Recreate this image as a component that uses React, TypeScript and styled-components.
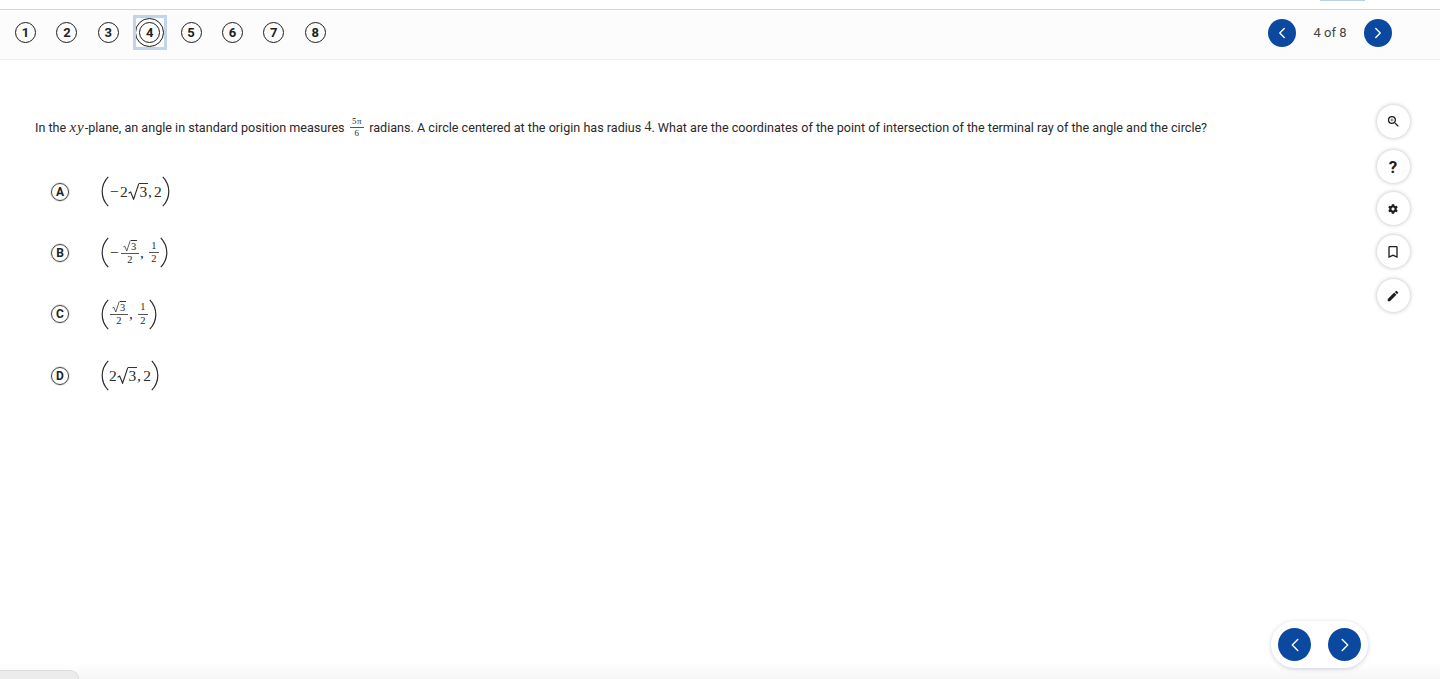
import React from "react";
import styled, { createGlobalStyle } from "styled-components";
import { ChevronLeft, ChevronRight } from "lucide-react";
import { MdBookmarkBorder, MdEdit, MdZoomIn } from "react-icons/md";
import { FaCog } from "react-icons/fa";

const BLUE = "#0b48a0";
const MATH_FONT = `"Liberation Serif", serif`;

const GlobalStyle = createGlobalStyle`
  html, body {
    margin: 0;
    padding: 0;
    height: 100%;
    background: #fff;
    overflow: hidden;
  }
  body {
    font-family: Roboto, "Liberation Sans", sans-serif;
    color: #2a2a2a;
  }
`;

const Page = styled.div`
  position: relative;
  height: 679px;
  overflow: hidden;
  background: #fff;
`;

const TopStrip = styled.div`
  height: 9px;
  display: flex;
  justify-content: flex-end;
  padding-right: 75px;
`;

const TopTab = styled.div`
  width: 45px;
  height: 1px;
  background: #bccde6;
`;

const NavBar = styled.nav`
  box-sizing: border-box;
  height: 51px;
  display: flex;
  align-items: center;
  justify-content: space-between;
  padding: 0 48px 4px 15px;
  background: #fcfcfc;
  border-top: 1px solid #d6d6d6;
  border-bottom: 1px solid #f0f0f0;
`;

const Steps = styled.div`
  display: flex;
  align-items: center;
  gap: 20.4px;
`;

const Step = styled.div<{ $active?: boolean }>`
  position: relative;
  box-sizing: border-box;
  width: 21px;
  height: 21px;
  flex: none;
  display: flex;
  align-items: center;
  justify-content: center;
  border-radius: 50%;
  border: ${(p) => (p.$active ? "1.6px" : "1px")} solid #1c1c1c;
  font-size: 13px;
  font-weight: 700;
  color: #222;
  background: ${(p) => (p.$active ? "#fff" : "transparent")};

  ${(p) =>
    p.$active &&
    `
    &::before {
      content: "";
      position: absolute;
      inset: -5px;
      border-radius: 50%;
      border: 1px solid #1c1c1c;
    }
    &::after {
      content: "";
      position: absolute;
      inset: -8.1px -7.6px;
      border: 3px solid #c2d3ea;
    }
  `}
`;

const Pager = styled.div`
  display: flex;
  align-items: center;
`;

const PagerLabel = styled.span`
  width: 68px;
  text-align: center;
  font-size: 13px;
  color: #444;
`;

const RoundButton = styled.button<{ $size: number }>`
  width: ${(p) => p.$size}px;
  height: ${(p) => p.$size}px;
  flex: none;
  padding: 0;
  display: flex;
  align-items: center;
  justify-content: center;
  border: none;
  border-radius: 50%;
  background: ${BLUE};
  color: #fff;
`;

const Main = styled.main`
  display: flex;
  justify-content: space-between;
  padding: 45px 30.5px 0 35px;
`;

const Content = styled.div`
  padding-top: 12px;
`;

const Question = styled.p`
  margin: 0;
  display: flex;
  align-items: center;
  height: 20px;
  font-size: 12.6px;
  white-space: pre;
  color: #2a2a2a;
`;

const MathText = styled.span<{ $italic?: boolean }>`
  font-family: ${MATH_FONT};
  font-style: ${(p) => (p.$italic ? "italic" : "normal")};
  font-size: ${(p) => (p.$italic ? 15 : 14)}px;
  letter-spacing: ${(p) => (p.$italic ? "1px" : "0")};
`;

const Fraction = styled.span<{ $size: number }>`
  display: inline-flex;
  flex-direction: column;
  align-items: center;
  margin: 0 ${(p) => (p.$size < 10 ? 6.5 : 2)}px;
  font-family: ${MATH_FONT};
  font-size: ${(p) => p.$size}px;
  line-height: 1;
  letter-spacing: 0.3px;
  color: #2a2a2a;
`;

const Numerator = styled.span`
  display: flex;
  justify-content: center;
  min-width: 100%;
  padding: 0 1px 1px;
  border-bottom: 1px solid #555;
`;

const Denominator = styled.span`
  padding-top: 1px;
`;

const Options = styled.div`
  margin-top: 24px;
  padding-left: 16px;
  display: flex;
  flex-direction: column;
`;

const OptionRow = styled.div`
  height: 61.3px;
  display: flex;
  align-items: center;
  gap: 32px;
`;

const Badge = styled.span`
  box-sizing: border-box;
  width: 18px;
  height: 18px;
  display: flex;
  align-items: center;
  justify-content: center;
  border-radius: 50%;
  border: 1px solid #444;
  box-shadow: 0 0 0 1px #e4e4e4;
  font-size: 12px;
  font-weight: 700;
  color: #222;
`;

const Formula = styled.span`
  display: inline-flex;
  align-items: center;
  font-family: ${MATH_FONT};
  font-size: 15.5px;
  letter-spacing: 0.2px;
  color: #2a2a2a;
  white-space: pre;
`;

const Minus = styled.span`
  margin: 0 1px;
`;

const Comma = styled.span<{ $wide?: boolean }>`
  margin-right: ${(p) => (p.$wide ? 4 : 2)}px;
`;

const Paren = styled.svg`
  width: 8px;
  height: 31px;
  flex: none;
  fill: none;
  stroke: #2a2a2a;
  stroke-width: 1.2;
`;

const Root = styled.span`
  display: inline-flex;
  align-items: flex-start;
  line-height: 1;
`;

const RootSign = styled.svg`
  width: 0.72em;
  height: 1.12em;
  flex: none;
  fill: none;
  stroke: #2a2a2a;
  stroke-width: 1;
`;

const Radicand = styled.span`
  border-top: 1px solid #333;
  padding: 0 0.5px;
  line-height: 1.05;
`;

const Tools = styled.aside`
  display: flex;
  flex-direction: column;
`;

const ToolButton = styled.button<{ $gap: number }>`
  width: 33px;
  height: 33px;
  margin-top: ${(p) => p.$gap}px;
  padding: 0;
  display: flex;
  align-items: center;
  justify-content: center;
  border: none;
  border-radius: 50%;
  background: #fff;
  color: #1e1e1e;
  font-family: Roboto, sans-serif;
  font-size: 17px;
  font-weight: 700;
  box-shadow: 0 0 4px rgba(0, 0, 0, 0.28);
`;

const FloatingPager = styled.div`
  position: absolute;
  right: 72px;
  bottom: 11px;
  z-index: 2;
  box-sizing: border-box;
  width: 97px;
  height: 47px;
  display: flex;
  align-items: center;
  justify-content: center;
  gap: 17px;
  border-radius: 24px;
  background: #fff;
  box-shadow: 0 1px 4px rgba(60, 70, 110, 0.25);
`;

const BottomFade = styled.div`
  position: absolute;
  left: 0;
  right: 0;
  bottom: 0;
  height: 16px;
  background: linear-gradient(to bottom, rgba(238, 238, 238, 0), rgba(238, 238, 238, 0.55));
`;

const CornerTab = styled.div`
  position: absolute;
  left: 0;
  bottom: 0;
  width: 78px;
  height: 8px;
  background: #ececec;
  border-top: 1px solid #dcdcdc;
  border-right: 1px solid #dcdcdc;
  border-top-right-radius: 9px;
`;

const LeftParen = () => (
  <Paren viewBox="0 0 8 31">
    <path d="M7.2 0.8C2.8 5.5 1.2 10 1.2 15.5s1.6 10 6 14.7" />
  </Paren>
);

const RightParen = () => (
  <Paren viewBox="0 0 8 31">
    <path d="M0.8 0.8C5.2 5.5 6.8 10 6.8 15.5s-1.6 10-6 14.7" />
  </Paren>
);

const Sqrt3 = () => (
  <Root>
    <RootSign viewBox="0 0 10 16" preserveAspectRatio="none">
      <path d="M0.5 9.5 2.4 8.4 5 15 9.7 0.5" />
    </RootSign>
    <Radicand>3</Radicand>
  </Root>
);

const Half = () => (
  <Fraction $size={10.5}>
    <Numerator>1</Numerator>
    <Denominator>2</Denominator>
  </Fraction>
);

const RootOverTwo = () => (
  <Fraction $size={10.5}>
    <Numerator>
      <Sqrt3 />
    </Numerator>
    <Denominator>2</Denominator>
  </Fraction>
);

const options = [
  {
    letter: "A",
    math: (
      <>
        <Minus>−</Minus>2
        <Sqrt3 />
        <Comma>,</Comma>2
      </>
    ),
  },
  {
    letter: "B",
    math: (
      <>
        <Minus>−</Minus>
        <RootOverTwo />
        <Comma $wide>,</Comma>
        <Half />
      </>
    ),
  },
  {
    letter: "C",
    math: (
      <>
        <RootOverTwo />
        <Comma $wide>,</Comma>
        <Half />
      </>
    ),
  },
  {
    letter: "D",
    math: (
      <>
        2
        <Sqrt3 />
        <Comma>,</Comma>2
      </>
    ),
  },
];

const App = () => {
  return (
    <Page>
      <GlobalStyle />
      <TopStrip>
        <TopTab />
      </TopStrip>
      <NavBar>
        <Steps>
          {[1, 2, 3, 4, 5, 6, 7, 8].map((n) => (
            <Step key={n} $active={n === 4}>
              {n}
            </Step>
          ))}
        </Steps>
        <Pager>
          <RoundButton $size={28}>
            <ChevronLeft size={18} strokeWidth={1.8} />
          </RoundButton>
          <PagerLabel>4 of 8</PagerLabel>
          <RoundButton $size={28}>
            <ChevronRight size={18} strokeWidth={1.8} />
          </RoundButton>
        </Pager>
      </NavBar>
      <Main>
        <Content>
          <Question>
            In the <MathText $italic>xy</MathText>-plane, an angle in standard position measures
            <Fraction $size={9}>
              <Numerator>5π</Numerator>
              <Denominator>6</Denominator>
            </Fraction>
            radians. A circle centered at the origin has radius <MathText>4</MathText>. What are the
            coordinates of the point of intersection of the terminal ray of the angle and the circle?
          </Question>
          <Options>
            {options.map((option) => (
              <OptionRow key={option.letter}>
                <Badge>{option.letter}</Badge>
                <Formula>
                  <LeftParen />
                  {option.math}
                  <RightParen />
                </Formula>
              </OptionRow>
            ))}
          </Options>
        </Content>
        <Tools>
          <ToolButton $gap={0} aria-label="Zoom">
            <MdZoomIn size={15} />
          </ToolButton>
          <ToolButton $gap={12} aria-label="Help">
            ?
          </ToolButton>
          <ToolButton $gap={9} aria-label="Settings">
            <FaCog size={10} />
          </ToolButton>
          <ToolButton $gap={10} aria-label="Bookmark">
            <MdBookmarkBorder size={16} />
          </ToolButton>
          <ToolButton $gap={11} aria-label="Annotate">
            <MdEdit size={14} />
          </ToolButton>
        </Tools>
      </Main>
      <BottomFade />
      <CornerTab />
      <FloatingPager>
        <RoundButton $size={33}>
          <ChevronLeft size={22} strokeWidth={1.6} />
        </RoundButton>
        <RoundButton $size={33}>
          <ChevronRight size={22} strokeWidth={1.6} />
        </RoundButton>
      </FloatingPager>
    </Page>
  );
};

export default App;
